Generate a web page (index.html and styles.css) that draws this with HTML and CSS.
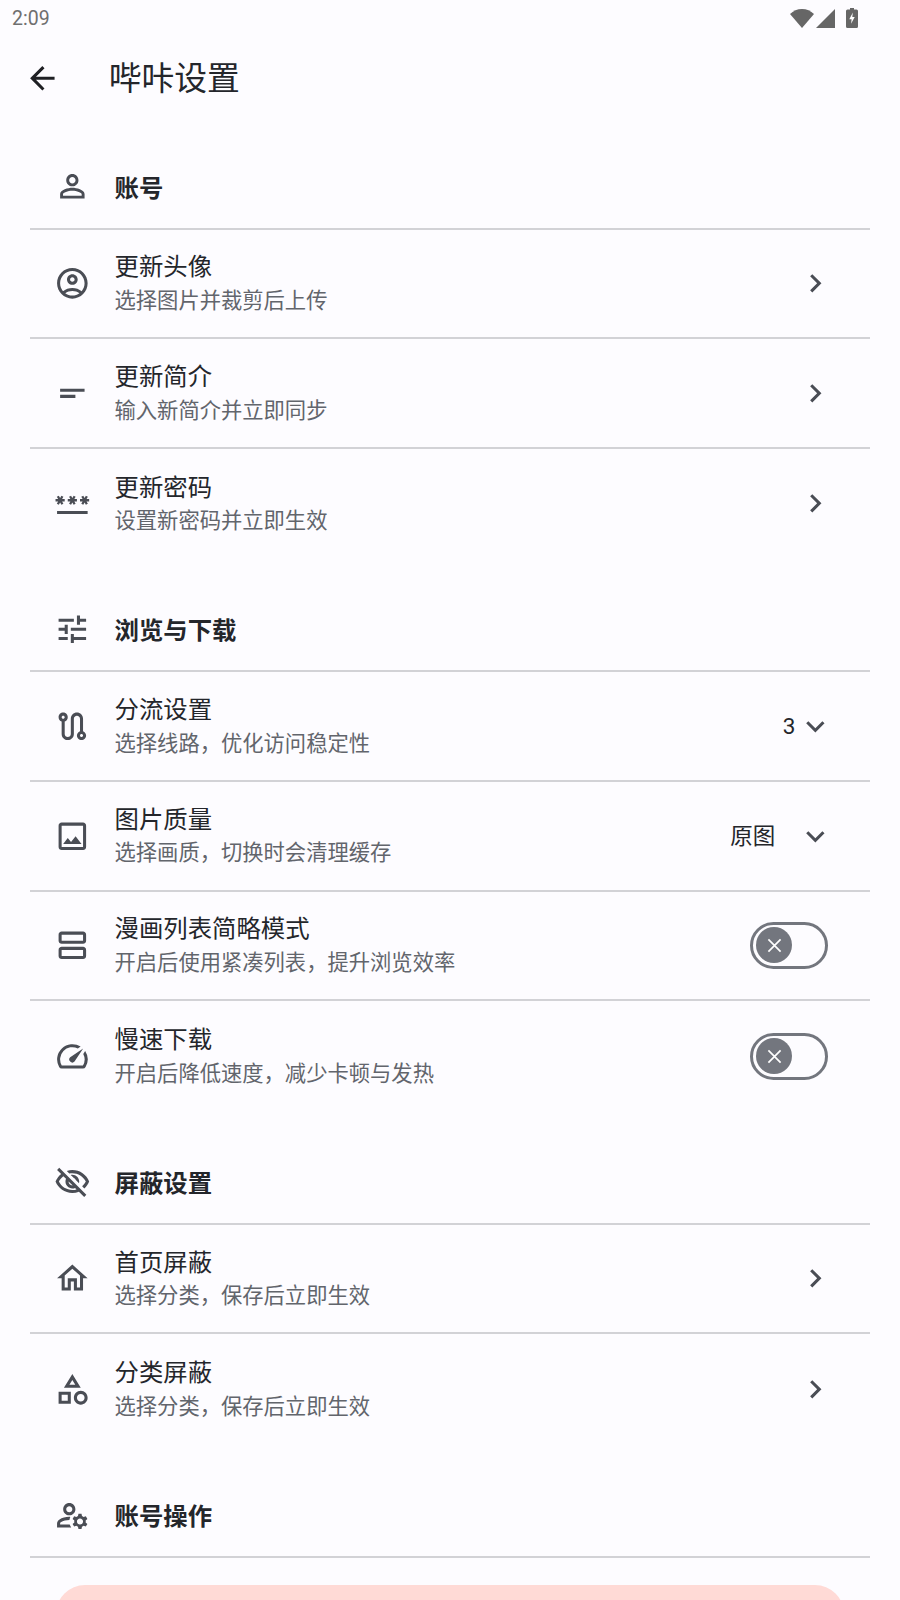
FILE: index.html
```html
<!DOCTYPE html>
<html lang="zh-CN">
<head>
    <meta charset="UTF-8" />
    <meta name="viewport" content="width=device-width, initial-scale=1" />
    <title>哔咔设置</title>
    <link rel="stylesheet" href="styles.css">
</head>
<body>
    <svg class="sprites" aria-hidden="true">
        <symbol id="i-back" viewBox="0 0 24 24"><path d="M20 11H7.83l5.59-5.59L12 4l-8 8 8 8 1.41-1.41L7.83 13H20v-2z"/></symbol>
        <symbol id="i-person" viewBox="0 0 24 24"><path d="M12 5.9c1.16 0 2.1.94 2.1 2.1s-.94 2.1-2.1 2.1S9.9 9.16 9.9 8s.94-2.1 2.1-2.1m0 9c2.97 0 6.1 1.46 6.1 2.1v1.1H5.9V17c0-.64 3.13-2.1 6.1-2.1M12 4C9.79 4 8 5.79 8 8s1.79 4 4 4 4-1.79 4-4-1.79-4-4-4zm0 9c-2.67 0-8 1.34-8 4v3h16v-3c0-2.66-5.33-4-8-4z"/></symbol>
        <symbol id="i-avatar" viewBox="0 0 24 24"><path d="M12 2C6.48 2 2 6.48 2 12s4.48 10 10 10 10-4.48 10-10S17.52 2 12 2zM7.35 18.5C8.66 17.56 10.26 17 12 17s3.34.56 4.65 1.5C15.34 19.44 13.74 20 12 20s-3.34-.56-4.65-1.5zm10.79-1.38C16.45 15.8 14.32 15 12 15s-4.45.8-6.14 2.12C4.7 15.73 4 13.95 4 12c0-4.42 3.58-8 8-8s8 3.58 8 8c0 1.95-.7 3.73-1.86 5.12z"/><path d="M12 6c-1.93 0-3.5 1.57-3.5 3.5S10.07 13 12 13s3.5-1.57 3.5-3.5S13.93 6 12 6zm0 5c-.83 0-1.5-.67-1.5-1.5S11.17 8 12 8s1.5.67 1.5 1.5S12.83 11 12 11z"/></symbol>
        <symbol id="i-short" viewBox="0 0 24 24"><path d="M4 9h16v2H4zm0 4h10v2H4z"/></symbol>
        <symbol id="i-password" viewBox="0 0 24 24"><path d="M2 17h20v2H2v-2zm1.15-4.05L4 11.47l.85 1.48 1.3-.75-.85-1.48H7v-1.5H5.3l.85-1.47L4.85 7 4 8.47 3.15 7l-1.3.75.85 1.47H1v1.5h1.7l-.85 1.48 1.3.75zm6.7-.75 1.3.75.85-1.48.85 1.48 1.3-.75-.85-1.48H15v-1.5h-1.7l.85-1.47-1.3-.75L12 8.47 11.15 7l-1.3.75.85 1.47H9v1.5h1.7l-.85 1.48zM23 9.22h-1.7l.85-1.47-1.3-.75L20 8.47 19.15 7l-1.3.75.85 1.47H17v1.5h1.7l-.85 1.48 1.3.75.85-1.48.85 1.48 1.3-.75-.85-1.48H23v-1.5z"/></symbol>
        <symbol id="i-tune" viewBox="0 0 24 24"><path d="M3 17v2h6v-2H3zM3 5v2h10V5H3zm10 16v-2h8v-2h-8v-2h-2v6h2zM7 9v2H3v2h4v2h2V9H7zm14 4v-2H11v2h10zm-6-4h2V7h4V5h-4V3h-2v6z"/></symbol>
        <symbol id="i-route" viewBox="0 0 24 24"><path d="M19 15.18V7c0-2.21-1.79-4-4-4s-4 1.79-4 4v10c0 1.1-.9 2-2 2s-2-.9-2-2V8.82C8.16 8.4 9 7.3 9 6c0-1.66-1.34-3-3-3S3 4.34 3 6c0 1.3.84 2.4 2 2.82V17c0 2.21 1.79 4 4 4s4-1.79 4-4V7c0-1.1.9-2 2-2s2 .9 2 2v8.18c-1.16.41-2 1.51-2 2.82 0 1.66 1.34 3 3 3s3-1.34 3-3c0-1.3-.84-2.4-2-2.82zM6 7c-.55 0-1-.45-1-1s.45-1 1-1 1 .45 1 1-.45 1-1 1zm12 12c-.55 0-1-.45-1-1s.45-1 1-1 1 .45 1 1-.45 1-1 1z"/></symbol>
        <symbol id="i-image" viewBox="0 0 24 24"><path d="M19 5v14H5V5h14m0-2H5c-1.1 0-2 .9-2 2v14c0 1.1.9 2 2 2h14c1.1 0 2-.9 2-2V5c0-1.1-.9-2-2-2zm-4.86 8.86-3 3.87L9 13.14 6 17h12l-3.86-5.14z"/></symbol>
        <symbol id="i-agenda" viewBox="0 0 24 24"><path d="M19 13H5c-1.1 0-2 .9-2 2v4c0 1.1.9 2 2 2h14c1.1 0 2-.9 2-2v-4c0-1.1-.9-2-2-2zm0 6H5v-4h14v4zM19 3H5c-1.1 0-2 .9-2 2v4c0 1.1.9 2 2 2h14c1.1 0 2-.9 2-2V5c0-1.1-.9-2-2-2zm0 6H5V5h14v4z"/></symbol>
        <symbol id="i-speed" viewBox="0 0 24 24"><path d="M20.38 8.57l-1.23 1.85a8 8 0 0 1-.22 7.58H5.07A8 8 0 0 1 15.58 6.85l1.85-1.23A10 10 0 0 0 3.35 19a2 2 0 0 0 1.72 1h13.85a2 2 0 0 0 1.74-1 10 10 0 0 0-.27-10.44zm-9.79 6.84a2 2 0 0 0 2.83 0l5.66-8.49-8.49 5.66a2 2 0 0 0 0 2.83z"/></symbol>
        <symbol id="i-eye-off" viewBox="0 0 24 24"><path d="M12 6c3.79 0 7.17 2.13 8.82 5.5-.59 1.22-1.42 2.27-2.41 3.12l1.41 1.41c1.39-1.23 2.49-2.77 3.18-4.53C21.27 7.11 17 4 12 4c-1.27 0-2.49.2-3.64.57l1.65 1.65C10.66 6.09 11.32 6 12 6zm-1.07 1.14L13 9.21c.57.25 1.03.71 1.28 1.28l2.07 2.07c.08-.34.14-.7.14-1.07C16.5 9.01 14.48 7 12 7c-.37 0-.72.05-1.07.14zM2.01 3.87l2.68 2.68C3.06 7.83 1.77 9.53 1 11.5 2.73 15.89 7 19 12 19c1.52 0 2.98-.29 4.32-.82l3.42 3.42 1.41-1.41L3.42 2.45 2.01 3.87zm7.5 7.5l2.61 2.61c-.04.01-.08.02-.12.02-1.38 0-2.5-1.12-2.5-2.5 0-.05.01-.08.01-.13zm-3.4-3.4l1.75 1.75c-.23.55-.36 1.15-.36 1.78 0 2.48 2.02 4.5 4.5 4.5.63 0 1.23-.13 1.77-.36l.98.98c-.88.24-1.8.38-2.75.38-3.79 0-7.17-2.13-8.82-5.5.7-1.43 1.72-2.61 2.93-3.53z"/></symbol>
        <symbol id="i-home" viewBox="0 0 24 24"><path d="M12 5.69l5 4.5V18h-2v-6H9v6H7v-7.81l5-4.5M12 3L2 12h3v8h6v-6h2v6h6v-8h3L12 3z"/></symbol>
        <symbol id="i-category" viewBox="0 0 24 24"><path d="M12 2l-5.5 9h11L12 2zm0 3.84L13.93 9h-3.87L12 5.84zM17.5 13c-2.49 0-4.5 2.01-4.5 4.5s2.01 4.5 4.5 4.5 4.5-2.01 4.5-4.5-2.01-4.5-4.5-4.5zm0 7c-1.38 0-2.5-1.12-2.5-2.5s1.12-2.5 2.5-2.5 2.5 1.12 2.5 2.5-1.12 2.5-2.5 2.5zM3 21.5h8v-8H3v8zm2-6h4v4H5v-4z"/></symbol>
        <symbol id="i-manage" viewBox="0 0 24 24"><path d="M4 18v-.65c0-.34.16-.66.41-.81C6.1 15.53 8.03 15 10 15c.03 0 .05 0 .08.01.1-.7.3-1.37.59-1.98-.22-.02-.44-.03-.67-.03-2.42 0-4.68.67-6.61 1.82-.88.52-1.39 1.5-1.39 2.53V20h9.26c-.42-.6-.75-1.28-.97-2H4z"/><path d="M10 12c2.21 0 4-1.79 4-4s-1.79-4-4-4-4 1.79-4 4 1.79 4 4 4zm0-6c1.1 0 2 .9 2 2s-.9 2-2 2-2-.9-2-2 .9-2 2-2z"/><path d="M20.75 16c0-.22-.03-.42-.06-.63l1.14-1.01-1-1.73-1.45.49c-.32-.27-.68-.48-1.08-.63L18 11h-2l-.3 1.49c-.4.15-.76.36-1.08.63l-1.45-.49-1 1.73 1.14 1.01c-.03.21-.06.41-.06.63s.03.42.06.63l-1.14 1.01 1 1.73 1.45-.49c.32.27.68.48 1.08.63L16 21h2l.3-1.49c.4-.15.76-.36 1.08-.63l1.45.49 1-1.73-1.14-1.01c.03-.21.06-.41.06-.63zM17 18c-1.1 0-2-.9-2-2s.9-2 2-2 2 .9 2 2-.9 2-2 2z"/></symbol>
        <symbol id="i-right" viewBox="0 0 24 24"><path d="M10 6L8.59 7.41 13.17 12l-4.58 4.59L10 18l6-6z"/></symbol>
        <symbol id="i-down" viewBox="0 0 24 24"><path d="M16.59 8.59L12 13.17 7.41 8.59 6 10l6 6 6-6z"/></symbol>
        <symbol id="i-close" viewBox="0 0 16 16"><path d="M1.500 1.500l13 13M14.500 1.500l-13 13" fill="none" stroke="#fff" stroke-width="1.800"/></symbol>
    </svg>

    <div class="page">
        <div class="status_bar">
            <span class="status_time">2:09</span>
            <div class="status_icons">
                <svg class="status_wifi" viewBox="0 0 24 19"><path d="M12 19L0 5C3.200 1.900 7.400 0 12 0s8.800 1.900 12 5z"/></svg>
                <svg class="status_signal" viewBox="0 0 19 19"><path d="M19 0v19H0z"/></svg>
                <svg class="status_battery" viewBox="0 0 12 20"><path d="M4 0h4v1.500h2.500A1.500 1.500 0 0 1 12 3v15.500a1.500 1.500 0 0 1-1.500 1.500h-9A1.500 1.500 0 0 1 0 18.500V3a1.500 1.500 0 0 1 1.500-1.500H4z"/><path class="status_bolt" d="M6.800 4.500 3.300 11.200h2.300l-.5 4.600 3.600-6.900H6.300z"/></svg>
            </div>
        </div>

        <header class="app_bar">
            <svg class="icon icon_dark"><use href="#i-back"/></svg>
            <h1 class="app_title">哔咔设置</h1>
        </header>

        <section class="group">
            <div class="group_head">
                <svg class="icon"><use href="#i-person"/></svg>
                <h2 class="group_title">账号</h2>
            </div>
            <div class="row">
                <svg class="icon"><use href="#i-avatar"/></svg>
                <div class="row_text">
                    <div class="row_title">更新头像</div>
                    <div class="row_sub">选择图片并裁剪后上传</div>
                </div>
                <svg class="icon"><use href="#i-right"/></svg>
            </div>
            <div class="row">
                <svg class="icon"><use href="#i-short"/></svg>
                <div class="row_text">
                    <div class="row_title">更新简介</div>
                    <div class="row_sub">输入新简介并立即同步</div>
                </div>
                <svg class="icon"><use href="#i-right"/></svg>
            </div>
            <div class="row">
                <svg class="icon"><use href="#i-password"/></svg>
                <div class="row_text">
                    <div class="row_title">更新密码</div>
                    <div class="row_sub">设置新密码并立即生效</div>
                </div>
                <svg class="icon"><use href="#i-right"/></svg>
            </div>
        </section>

        <section class="group">
            <div class="group_head">
                <svg class="icon"><use href="#i-tune"/></svg>
                <h2 class="group_title">浏览与下载</h2>
            </div>
            <div class="row">
                <svg class="icon"><use href="#i-route"/></svg>
                <div class="row_text">
                    <div class="row_title">分流设置</div>
                    <div class="row_sub">选择线路，优化访问稳定性</div>
                </div>
                <span class="row_value">3</span>
                <svg class="icon"><use href="#i-down"/></svg>
            </div>
            <div class="row">
                <svg class="icon"><use href="#i-image"/></svg>
                <div class="row_text">
                    <div class="row_title">图片质量</div>
                    <div class="row_sub">选择画质，切换时会清理缓存</div>
                </div>
                <span class="row_value row_value_wide">原图</span>
                <svg class="icon"><use href="#i-down"/></svg>
            </div>
            <div class="row">
                <svg class="icon"><use href="#i-agenda"/></svg>
                <div class="row_text">
                    <div class="row_title">漫画列表简略模式</div>
                    <div class="row_sub">开启后使用紧凑列表，提升浏览效率</div>
                </div>
                <div class="switch"><span class="switch_thumb"><svg class="switch_x"><use href="#i-close"/></svg></span></div>
            </div>
            <div class="row">
                <svg class="icon"><use href="#i-speed"/></svg>
                <div class="row_text">
                    <div class="row_title">慢速下载</div>
                    <div class="row_sub">开启后降低速度，减少卡顿与发热</div>
                </div>
                <div class="switch"><span class="switch_thumb"><svg class="switch_x"><use href="#i-close"/></svg></span></div>
            </div>
        </section>

        <section class="group">
            <div class="group_head">
                <svg class="icon"><use href="#i-eye-off"/></svg>
                <h2 class="group_title">屏蔽设置</h2>
            </div>
            <div class="row">
                <svg class="icon"><use href="#i-home"/></svg>
                <div class="row_text">
                    <div class="row_title">首页屏蔽</div>
                    <div class="row_sub">选择分类，保存后立即生效</div>
                </div>
                <svg class="icon"><use href="#i-right"/></svg>
            </div>
            <div class="row">
                <svg class="icon"><use href="#i-category"/></svg>
                <div class="row_text">
                    <div class="row_title">分类屏蔽</div>
                    <div class="row_sub">选择分类，保存后立即生效</div>
                </div>
                <svg class="icon"><use href="#i-right"/></svg>
            </div>
        </section>

        <section class="group">
            <div class="group_head">
                <svg class="icon"><use href="#i-manage"/></svg>
                <h2 class="group_title">账号操作</h2>
            </div>
            <div class="danger_button"></div>
        </section>
    </div>
</body>
</html>
```

FILE: styles.css
```css
* {
    box-sizing: border-box;
}

html, body {
    margin: 0;
    height: 1600px;
    overflow: hidden;
}

body {
    font-family: Roboto, "Noto Sans CJK SC", sans-serif;
    background: #fdfcff;
    color: #24262b;
}

.sprites {
    display: none;
}

.page {
    height: 1600px;
    overflow: hidden;
}

.icon {
    width: 36.7px;
    height: 36.7px;
    flex: none;
    fill: #4a4d55;
}

.icon_dark {
    fill: #1f2024;
}

/* status bar */
.status_bar {
    height: 36px;
    display: flex;
    align-items: center;
    justify-content: space-between;
    padding: 0 42px 0 12px;
}

.status_time {
    font-size: 19.5px;
    color: #6f6f6f;
}

.status_icons {
    display: flex;
    align-items: center;
    gap: 2px;
}

.status_icons svg {
    fill: #666;
}

.status_wifi {
    width: 24px;
    height: 19px;
}

.status_signal {
    width: 19px;
    height: 19px;
}

.status_battery {
    width: 12px;
    height: 20px;
    margin-left: 9px;
}

.status_icons .status_bolt {
    fill: #fff;
}

/* app bar */
.app_bar {
    height: 79.7px;
    padding: 5px 0 0 24px;
    display: flex;
    align-items: center;
    gap: 48px;
}

.app_title {
    margin: 1px 0 0;
    font-size: 32.8px;
    font-weight: 400;
    line-height: 44px;
}

/* groups */
.group {
    margin: 30px 30px 0;
}

.group_head {
    height: 84px;
    padding: 0 23.8px;
    display: flex;
    align-items: center;
    gap: 24px;
    border-bottom: 2px solid #d2d2d6;
}

.group_title {
    margin: 4px 0 0;
    font-size: 24.4px;
    font-weight: 700;
    line-height: 32px;
}

.row {
    height: 109.6px;
    padding: 0 36px 0 23.8px;
    display: flex;
    align-items: center;
    gap: 24px;
    border-bottom: 2px solid #d2d2d6;
}

.row:last-child {
    border-bottom: none;
}

.row_text {
    flex: 1;
    min-width: 0;
    padding-top: 1.5px;
}

.row_title {
    font-size: 24.4px;
    line-height: 32px;
}

.row_sub {
    margin-top: 1.5px;
    font-size: 21.3px;
    line-height: 32px;
    color: #62656c;
}

.row_value {
    font-size: 22.5px;
    line-height: 32px;
    margin-right: -22px;
}

.row_value_wide {
    margin-right: -2px;
}

/* off switch */
.switch {
    width: 78px;
    height: 47px;
    margin-right: 6px;
    padding: 0 0 0 3px;
    display: flex;
    align-items: center;
    flex: none;
    border: 3px solid #73767e;
    border-radius: 24px;
}

.switch_thumb {
    width: 36px;
    height: 36px;
    display: flex;
    align-items: center;
    justify-content: center;
    border-radius: 50%;
    background: #73767e;
}

.switch_x {
    width: 15px;
    height: 15px;
}

.danger_button {
    height: 70px;
    margin: 27px 26px 0;
    border-radius: 29px;
    background: #ffdad6;
}
```
